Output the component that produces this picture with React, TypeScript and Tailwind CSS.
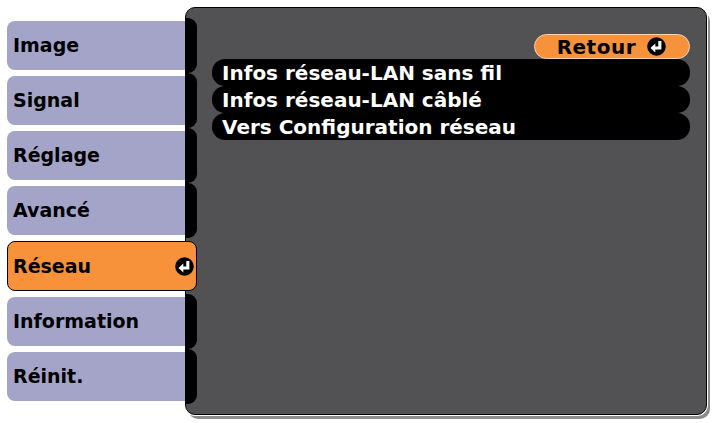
import React from 'react';

const tabs = ['Image', 'Signal', 'Réglage', 'Avancé', 'Réseau', 'Information', 'Réinit.'];
const selected = 'Réseau';

const items = ['Infos réseau-LAN sans fil', 'Infos réseau-LAN câblé', 'Vers Configuration réseau'];

function EnterIcon() {
  return (
    <svg className="w-[19px] h-[19px] shrink-0" viewBox="0 0 16 16">
      <circle cx="8" cy="8" r="7.8" fill="#000" />
      <path d="M10.8 3.4 V9.2 H6.4" stroke="#fff" strokeWidth="2.6" fill="none" strokeLinejoin="miter" />
      <path d="M2.9 9.2 L7 5.4 L7 13 Z" fill="#fff" />
    </svg>
  );
}

export default function App() {
  return (
    <div
      className="w-[712px] h-[423px] bg-white flex pl-[7px] pt-[7px]"
      style={{ fontFamily: '"DejaVu Sans", "Liberation Sans", sans-serif' }}
    >
      {/* Left menu tabs */}
      <div className="relative z-10 w-[190px] pt-[14px] flex flex-col gap-[6px]">
        {tabs.map((t) =>
          t === selected ? (
            <div
              key={t}
              className="h-[50px] w-[190px] flex items-center justify-between pl-[5px] pr-[2px] bg-[#f7913a] border border-black rounded-[8px]"
            >
              <span className="text-[19px] font-bold text-black">{t}</span>
              <EnterIcon />
            </div>
          ) : (
            <div key={t} className="h-[49px] flex">
              <div className="w-[178px] h-full flex items-center pl-[6px] bg-[#a4a4c8] rounded-l-[8px]">
                <span className="text-[19px] font-bold text-black">{t}</span>
              </div>
              <div className="w-[12px] -my-[3px] bg-black rounded-r-[9px]" />
            </div>
          )
        )}
      </div>

      {/* Main panel */}
      <div className="-ml-[12px] w-[522px] h-[408px] bg-[#525254] border border-black rounded-[10px] shadow-[0_0_0_1px_#fff,3px_4px_0_0_#8c8c8c] pl-[26px] pr-[16px] pt-[26px] flex flex-col">
        <div className="flex justify-end">
          <div className="h-[25px] w-[156px] flex items-center justify-end gap-[11px] pr-[23px] bg-[#f7913a] rounded-full border border-[#f3d3b0]">
            <span className="text-[20px] font-bold text-black leading-none tracking-[0.5px]">Retour</span>
            <EnterIcon />
          </div>
        </div>
        <div className="flex flex-col">
          {items.map((it) => (
            <div
              key={it}
              className="h-[27px] flex items-center pl-[10px] bg-black rounded-[13px] text-white text-[20px] font-bold leading-none"
            >
              {it}
            </div>
          ))}
        </div>
      </div>
    </div>
  );
}
